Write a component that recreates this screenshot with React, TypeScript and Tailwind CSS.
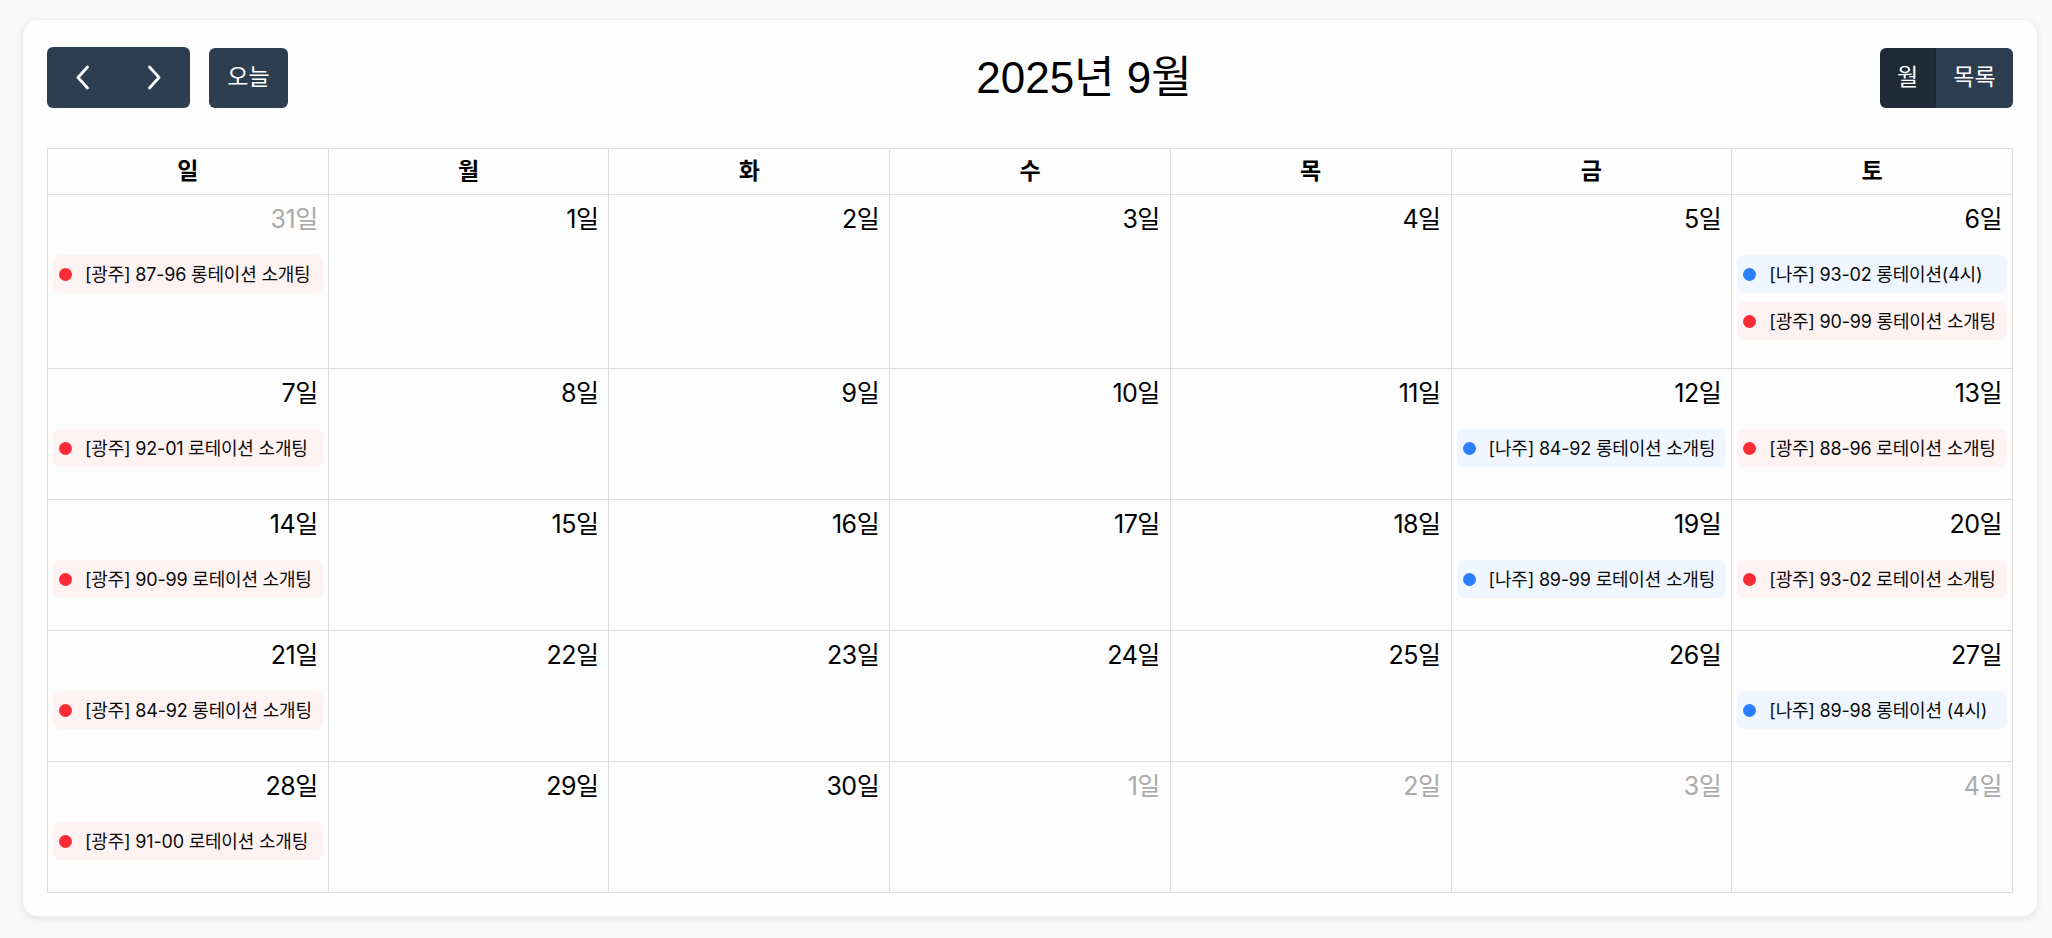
import React from 'react';

type Ev = { c: 'red' | 'blue'; t: string };
type Day = { n: number; other?: boolean; events?: Ev[] };

const weeks: Day[][] = [
  [
    { n: 31, other: true, events: [{ c: 'red', t: '[광주] 87-96 롱테이션 소개팅' }] },
    { n: 1 },
    { n: 2 },
    { n: 3 },
    { n: 4 },
    { n: 5 },
    {
      n: 6,
      events: [
        { c: 'blue', t: '[나주] 93-02 롱테이션(4시)' },
        { c: 'red', t: '[광주] 90-99 롱테이션 소개팅' },
      ],
    },
  ],
  [
    { n: 7, events: [{ c: 'red', t: '[광주] 92-01 로테이션 소개팅' }] },
    { n: 8 },
    { n: 9 },
    { n: 10 },
    { n: 11 },
    { n: 12, events: [{ c: 'blue', t: '[나주] 84-92 롱테이션 소개팅' }] },
    { n: 13, events: [{ c: 'red', t: '[광주] 88-96 로테이션 소개팅' }] },
  ],
  [
    { n: 14, events: [{ c: 'red', t: '[광주] 90-99 로테이션 소개팅' }] },
    { n: 15 },
    { n: 16 },
    { n: 17 },
    { n: 18 },
    { n: 19, events: [{ c: 'blue', t: '[나주] 89-99 로테이션 소개팅' }] },
    { n: 20, events: [{ c: 'red', t: '[광주] 93-02 로테이션 소개팅' }] },
  ],
  [
    { n: 21, events: [{ c: 'red', t: '[광주] 84-92 롱테이션 소개팅' }] },
    { n: 22 },
    { n: 23 },
    { n: 24 },
    { n: 25 },
    { n: 26 },
    { n: 27, events: [{ c: 'blue', t: '[나주] 89-98 롱테이션 (4시)' }] },
  ],
  [
    { n: 28, events: [{ c: 'red', t: '[광주] 91-00 로테이션 소개팅' }] },
    { n: 29 },
    { n: 30 },
    { n: 1, other: true },
    { n: 2, other: true },
    { n: 3, other: true },
    { n: 4, other: true },
  ],
];

const dayNames = ['일', '월', '화', '수', '목', '금', '토'];
const rowHeights = ['h-[174px]', 'h-[131px]', 'h-[131px]', 'h-[131px]', 'h-[131px]'];

function Chevron({ dir }: { dir: 'left' | 'right' }) {
  return (
    <svg width="15" height="25" viewBox="0 0 15 25" fill="none">
      <path
        d={dir === 'left' ? 'M12.5 2 L3 12.5 L12.5 23' : 'M2.5 2 L12 12.5 L2.5 23'}
        stroke="white"
        strokeWidth="2.8"
        strokeLinecap="round"
        strokeLinejoin="round"
      />
    </svg>
  );
}

function EventChip({ ev }: { ev: Ev }) {
  const red = ev.c === 'red';
  return (
    <div
      className={`mx-[5px] h-[38px] rounded-lg flex items-center pl-[6px] gap-[13px] ${
        red ? 'bg-[#fef2f2]' : 'bg-[#eff6ff]'
      }`}
    >
      <span
        className={`w-[13px] h-[13px] rounded-full shrink-0 ${red ? 'bg-[#fb2c36]' : 'bg-[#2b7fff]'}`}
      />
      <span className="text-[18px] tracking-[-0.2px] text-[#0a0a0a] whitespace-nowrap">{ev.t}</span>
    </div>
  );
}

export default function App() {
  return (
    <div
      className="w-[2052px] h-[938px] bg-[#f8f8f8] pt-[19px] pl-[22px] pr-[14px]"
      style={{ fontFamily: "Inter, 'Noto Sans CJK KR', sans-serif" }}
    >
      <div className="h-[898px] bg-[#fdfdfd] rounded-2xl border border-[#f0f0f0] shadow-[0_2px_6px_rgba(0,0,0,0.08)] pt-[27px] px-[24px]">
        {/* toolbar */}
        <div className="flex items-center justify-between h-[61px]">
          <div className="flex items-center gap-[19px]">
            <div className="flex h-[61px] w-[143px] rounded-md bg-[#2c3e50] overflow-hidden">
              <button className="flex-1 flex items-center justify-center">
                <Chevron dir="left" />
              </button>
              <button className="flex-1 flex items-center justify-center">
                <Chevron dir="right" />
              </button>
            </div>
            <button className="h-[60px] w-[79px] rounded-md bg-[#2c3e50] text-white text-[23px]">
              오늘
            </button>
          </div>
          <h2
            className="text-[44px] text-black leading-none"
            style={{ fontFamily: "'Liberation Sans', 'Noto Sans CJK KR', sans-serif" }}
          >
            2025년 9월
          </h2>
          <div className="flex h-[60px] rounded-md overflow-hidden">
            <button className="w-[56px] bg-[#1e2b37] text-white text-[23px] border-r border-[#1a252f]">
              월
            </button>
            <button className="w-[77px] bg-[#2c3e50] text-white text-[23px]">목록</button>
          </div>
        </div>

        {/* grid */}
        <div className="mt-[40px] border-l border-t border-[#dddddd]">
          <div className="grid grid-cols-7 h-[46px]">
            {dayNames.map((d) => (
              <div
                key={d}
                className="border-r border-b border-[#dddddd] flex items-center justify-center text-[23px] font-bold text-black"
              >
                {d}
              </div>
            ))}
          </div>
          {weeks.map((week, wi) => (
            <div key={wi} className={`grid grid-cols-7 ${rowHeights[wi]}`}>
              {week.map((day, di) => (
                <div key={di} className="border-r border-b border-[#dddddd] flex flex-col">
                  <div
                    className={`text-right pr-[10px] pt-[10px] text-[25px] leading-[28px] tracking-[-0.5px] ${
                      day.other ? 'text-[#aaaaaa]' : 'text-black'
                    }`}
                  >
                    {day.n}일
                  </div>
                  {day.events && (
                    <div className="mt-[22px] flex flex-col gap-[9px]">
                      {day.events.map((ev, ei) => (
                        <EventChip key={ei} ev={ev} />
                      ))}
                    </div>
                  )}
                </div>
              ))}
            </div>
          ))}
        </div>
      </div>
    </div>
  );
}
